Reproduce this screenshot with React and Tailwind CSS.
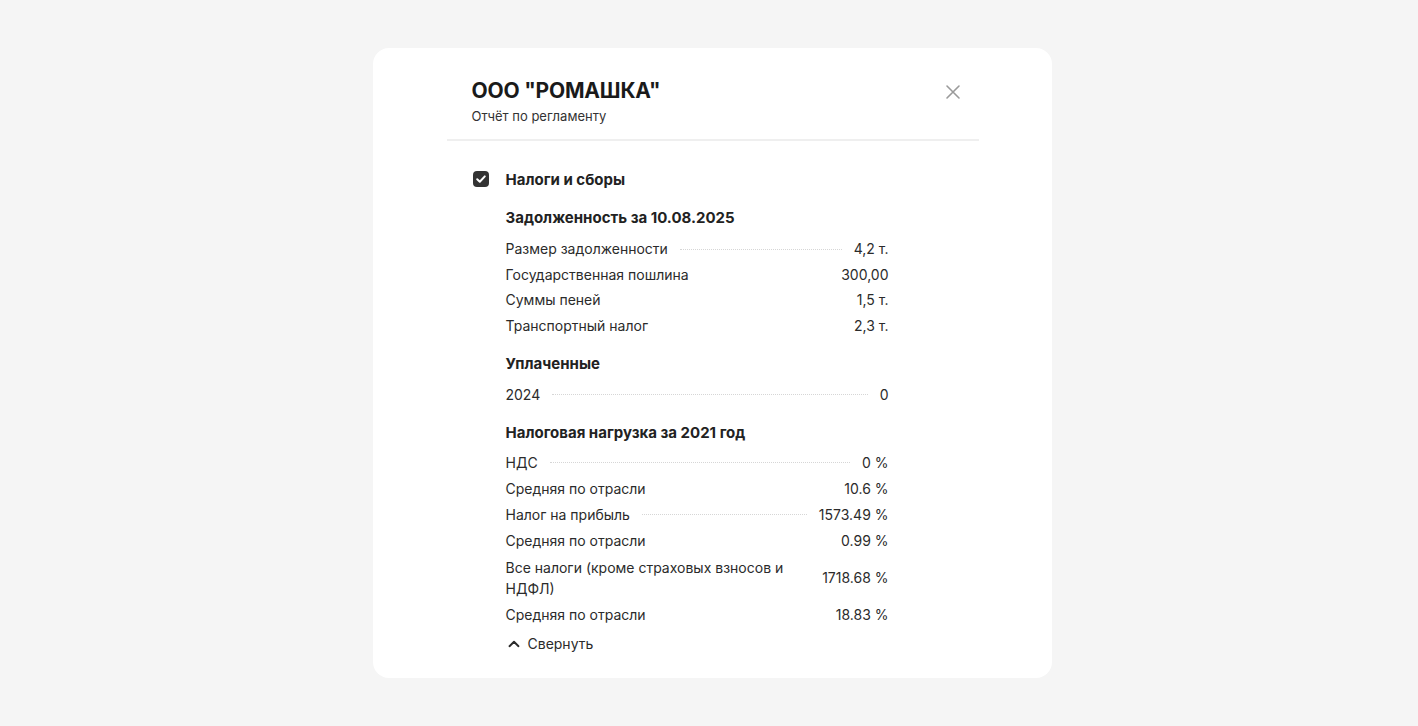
import React from "react";

const Row = ({ label, value, dots, multi }) => (
  <div className={"flex items-center text-[14px] text-[#2b2b2b] " + (multi ? "leading-[21px]" : "leading-[20px]")}>
    <span className={multi ? "max-w-[290px]" : "whitespace-nowrap"}>{label}</span>
    {dots ? (
      <span className="mx-3 flex-1 self-center border-b border-dotted border-[#d6d6d6]" />
    ) : (
      <span className="flex-1" />
    )}
    <span className="whitespace-nowrap">{value}</span>
  </div>
);

const Section = ({ title, children, tight }) => (
  <div className="flex flex-col">
    <div className={"text-[15px] font-bold leading-[22px] text-[#222] " + (tight ? "mb-[9px]" : "mb-[10px]")}>{title}</div>
    <div className={"flex flex-col " + (tight ? "gap-[6px]" : "gap-[5.67px]")}>{children}</div>
  </div>
);

export default function App() {
  return (
    <div
      className="min-h-[726px] w-full bg-[#f5f5f5] flex justify-center pt-[48px] pl-[7px]"
      style={{ fontFamily: "Inter, 'Noto Sans', sans-serif" }}
    >
      <div className="w-[679px] h-[630px] bg-white rounded-[16px] flex flex-col items-center">
        <div className="w-[532px] flex flex-col">
          <div className="flex justify-between items-start pl-[25px] pr-[18px] pt-[30px] pb-[14px] border-b-2 border-[#efefef]">
            <div className="flex flex-col">
              <div className="text-[21px] font-bold leading-[26px] text-[#1a1a1a] tracking-[-0.2px]">ООО "РОМАШКА"</div>
              <div className="text-[13px] leading-[18px] text-[#333] mt-[3px]">Отчёт по регламенту</div>
            </div>
            <svg width="16" height="16" viewBox="0 0 16 16" className="mt-[6px]">
              <path d="M2 2 L14 14 M14 2 L2 14" stroke="#9a9a9a" strokeWidth="1.6" strokeLinecap="round" />
            </svg>
          </div>
          <div className="flex pl-[26px] pt-[29px]">
            <div className="w-[16px] h-[16px] rounded-[4px] bg-[#333] flex items-center justify-center mt-[1px]">
              <svg width="12" height="12" viewBox="0 0 12 12">
                <path d="M2.2 6.2 L4.8 8.7 L9.8 3.4" stroke="white" strokeWidth="2" fill="none" strokeLinecap="round" strokeLinejoin="round" />
              </svg>
            </div>
            <div className="ml-[17px] w-[383px] flex flex-col">
              <div className="text-[15px] font-bold leading-[20px] text-[#222] mb-[17px]">Налоги и сборы</div>
              <div className="flex flex-col gap-[17px]">
                <Section title="Задолженность за 10.08.2025">
                  <Row label="Размер задолженности" value="4,2 т." dots />
                  <Row label="Государственная пошлина" value="300,00" />
                  <Row label="Суммы пеней" value="1,5 т." />
                  <Row label="Транспортный налог" value="2,3 т." />
                </Section>
                <Section title="Уплаченные">
                  <Row label="2024" value="0" dots />
                </Section>
                <Section title="Налоговая нагрузка за 2021 год" tight>
                  <Row label="НДС" value="0 %" dots />
                  <Row label="Средняя по отрасли" value="10.6 %" />
                  <Row label="Налог на прибыль" value="1573.49 %" dots />
                  <Row label="Средняя по отрасли" value="0.99 %" />
                  <Row label="Все налоги (кроме страховых взносов и НДФЛ)" value="1718.68 %" multi />
                  <Row label="Средняя по отрасли" value="18.83 %" />
                </Section>
              </div>
              <div className="flex items-center mt-[9px] text-[14px] leading-[20px] text-[#2b2b2b]">
                <svg width="12" height="12" viewBox="0 0 12 12" className="ml-[2px] mr-[8px]">
                  <path d="M1.5 8.2 L6 3.8 L10.5 8.2" stroke="#2b2b2b" strokeWidth="1.9" fill="none" strokeLinecap="round" strokeLinejoin="round" />
                </svg>
                Свернуть
              </div>
            </div>
          </div>
        </div>
      </div>
    </div>
  );
}
